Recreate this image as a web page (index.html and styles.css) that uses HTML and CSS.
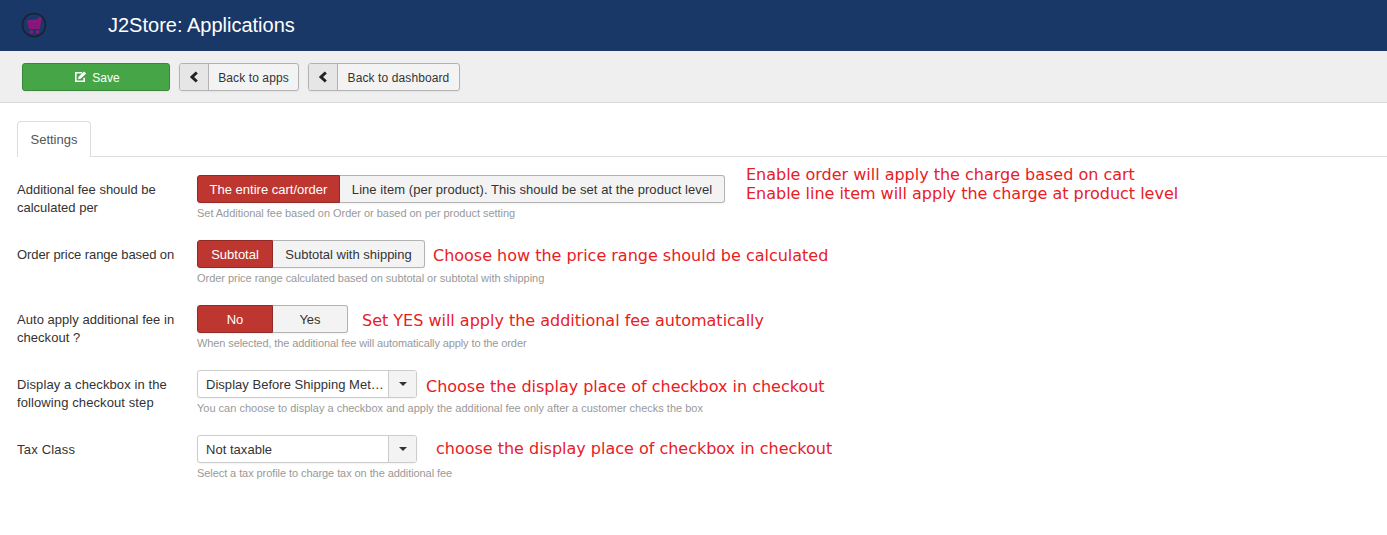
FILE: index.html
```html
<!DOCTYPE html>
<html lang="en">
<head>
<meta charset="utf-8">
<title>J2Store: Applications</title>
<link rel="stylesheet" href="styles.css">
</head>
<body>
<header class="header">
  <svg class="logo" width="26" height="26" viewBox="0 0 26 26">
    <circle cx="13" cy="13" r="11.5" fill="none" stroke="#192232" stroke-width="1.6"/>
    <path d="M6 8.5 17 7 17.5 5.3 20.5 5V7L18.8 17H8z" fill="#8f167b"/>
    <path d="M7 12h12M7.5 14.8h11M10.5 9v8M13.5 8.5V17M16.5 8v9" stroke="#6f1c75" stroke-width=".5"/>
    <path d="M9 18.4h3v2.8H9zM15 18.4h3v2.8h-3z" fill="#8f167b"/>
  </svg>
  <h1 class="title">J2Store: Applications</h1>
</header>
<nav class="toolbar">
  <button class="btn btn-save">
    <svg width="13" height="12" viewBox="0 0 13 12"><path d="M8 1.8H1.8v8.4h8.4V6.8" fill="none" stroke="#fff" stroke-width="1.6"/><path d="M4 8.3 4.6 5.8 10 .4 12.2 2.6 6.6 7.8z" fill="#fff"/></svg>
    <span class="save-text">Save</span>
  </button>
  <button class="btn btn-back"><span class="btn-icon"><svg width="10" height="12" viewBox="0 0 10 12"><path d="M7.8 1.5 3 6l4.8 4.5" fill="none" stroke="#222" stroke-width="3"/></svg></span><span class="btn-text">Back to apps</span></button>
  <button class="btn btn-back wide"><span class="btn-icon"><svg width="10" height="12" viewBox="0 0 10 12"><path d="M7.8 1.5 3 6l4.8 4.5" fill="none" stroke="#222" stroke-width="3"/></svg></span><span class="btn-text">Back to dashboard</span></button>
</nav>
<main class="content">
  <div class="tabs"><a class="tab">Settings</a></div>
  <div class="row">
    <label class="label">Additional fee should be<br>calculated per</label>
    <div class="field">
      <div class="line">
        <div class="group"><span class="opt on w-entire">The entire cart/order</span><span class="opt w-line">Line item (per product). This should be set at the product level</span></div>
        <p class="note note-cart">Enable order will apply the charge based on cart<br>Enable line item will apply the charge at product level</p>
      </div>
      <p class="help tight">Set Additional fee based on Order or based on per product setting</p>
    </div>
  </div>
  <div class="row">
    <label class="label label-range">Order price range based on</label>
    <div class="field">
      <div class="line">
        <div class="group"><span class="opt on w-short">Subtotal</span><span class="opt w-ship">Subtotal with shipping</span></div>
        <p class="note note-range">Choose how the price range should be calculated</p>
      </div>
      <p class="help tight">Order price range calculated based on subtotal or subtotal with shipping</p>
    </div>
  </div>
  <div class="row">
    <label class="label label-auto">Auto apply additional fee in<br>checkout ?</label>
    <div class="field">
      <div class="line">
        <div class="group"><span class="opt on w-short">No</span><span class="opt w-yes">Yes</span></div>
        <p class="note note-auto">Set YES will apply the additional fee automatically</p>
      </div>
      <p class="help tighter">When selected, the additional fee will automatically apply to the order</p>
    </div>
  </div>
  <div class="row">
    <label class="label label-step">Display a checkbox in the<br>following checkout step</label>
    <div class="field">
      <div class="line">
        <div class="select"><span class="value">Display Before Shipping Met…</span><span class="arrow"><i class="caret"></i></span></div>
        <p class="note note-place">Choose the display place of checkbox in checkout</p>
      </div>
      <p class="help">You can choose to display a checkbox and apply the additional fee only after a customer checks the box</p>
    </div>
  </div>
  <div class="row">
    <label class="label label-tax">Tax Class</label>
    <div class="field">
      <div class="line">
        <div class="select"><span class="value">Not taxable</span><span class="arrow"><i class="caret"></i></span></div>
        <p class="note note-tax">choose the display place of checkbox in checkout</p>
      </div>
      <p class="help tax-help">Select a tax profile to charge tax on the additional fee</p>
    </div>
  </div>
</main>
</body>
</html>
```

FILE: styles.css
```css
* { box-sizing: border-box; }
body { margin: 0; height: 535px; overflow: hidden; background: #fff; color: #333; font: 13px/18px "Liberation Sans", Arial, sans-serif; }
p, h1 { margin: 0; }
svg { display: block; }
.header { display: flex; align-items: center; height: 51px; padding-left: 21px; background: #1a3867; }
.logo { margin-bottom: 1px; }
.title { margin: 0 0 2px 61px; color: #fff; font-size: 20px; line-height: 28px; font-weight: 400; }
.toolbar { display: flex; align-items: flex-start; height: 52px; padding: 12px 22px; background: #efefef; border-bottom: 1px solid #d9d9d9; }
.btn { display: flex; align-items: center; height: 28px; padding: 0; border: 1px solid #b3b3b3; border-radius: 3px; background: #f3f3f3; color: #333; font: 12px/26px "Liberation Sans", Arial, sans-serif; box-shadow: 0 1px 2px rgba(0,0,0,.05); }
.btn-save { justify-content: center; gap: 5px; width: 148px; padding-left: 2px; border-color: #3a873a; background: #46a546; color: #fff; }
.save-text { padding-top: 1px; }
.btn-back { width: 120px; margin-left: 9px; overflow: hidden; }
.btn-back.wide { width: 152px; }
.btn-icon { display: flex; align-items: center; justify-content: center; flex: none; width: 29px; height: 26px; border-right: 1px solid #b3b3b3; background: #e6e6e6; }
.btn-text { flex: 1; padding-top: 1px; text-align: center; white-space: nowrap; letter-spacing: .1px; }
.content { padding: 18px 0 0 17px; }
.tabs { display: flex; height: 36px; margin-bottom: 18px; border-bottom: 1px solid #ddd; }
.tab { width: 74px; height: 36px; border: 1px solid #ddd; border-bottom: 0; border-radius: 4px 4px 0 0; background: #fff; color: #555; line-height: 36px; text-align: center; }
.row { display: flex; height: 65px; }
.label { width: 180px; padding-top: 6px; white-space: nowrap; }
.label-range { letter-spacing: -.07px; }
.label-auto { letter-spacing: .04px; }
.label-step { letter-spacing: .1px; }
.label-tax { letter-spacing: .2px; }
.line { display: flex; height: 28px; }
.group { display: flex; flex: none; }
.opt { height: 28px; border: 1px solid #b3b3b3; border-left: 0; border-radius: 0 3px 3px 0; background: #f3f3f3; line-height: 27px; text-align: center; white-space: nowrap; box-shadow: 0 1px 2px rgba(0,0,0,.05); }
.opt.on { border: 1px solid #942a25; border-radius: 3px 0 0 3px; background: #bd362f; color: #fff; }
.w-entire { width: 143px; }
.w-line { width: 385px; letter-spacing: .055px; }
.w-short { width: 76px; }
.w-ship { width: 152px; }
.w-yes { width: 75px; }
.help { padding-top: 1px; color: #999; font-size: 11px; line-height: 18px; white-space: nowrap; }
.tight { letter-spacing: -.035px; }
.tighter { letter-spacing: -.105px; }
.tax-help { letter-spacing: -.075px; }
.note { color: #e8201f; font: 16px/19px "DejaVu Sans", sans-serif; white-space: nowrap; letter-spacing: -.01px; }
.note-cart { margin: -10px 0 0 21px; }
.note-range { margin: 6px 0 0 8px; }
.note-auto { margin: 6px 0 0 14px; }
.note-place { margin: 7px 0 0 9px; }
.note-tax { margin: 4px 0 0 19px; }
.select { display: flex; flex: none; width: 220px; height: 28px; border: 1px solid #ccc; border-radius: 3px; background: #fff; line-height: 27px; box-shadow: 0 1px 2px rgba(0,0,0,.05); overflow: hidden; }
.value { flex: 1; padding-left: 8px; white-space: nowrap; letter-spacing: .03px; }
.arrow { display: flex; align-items: center; justify-content: center; width: 28px; border-left: 1px solid #ccc; background: #f3f3f3; }
.caret { border: 4px solid transparent; border-top-color: #333; border-bottom: 0; }
```
